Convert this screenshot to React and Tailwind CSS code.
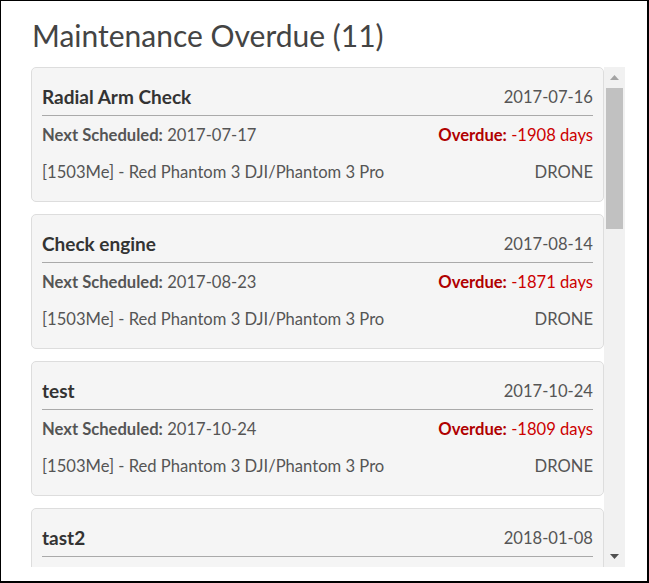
const ITEMS = [
  { name: "Radial Arm Check", last: "2017-07-16", next: "2017-07-17", days: -1908 },
  { name: "Check engine", last: "2017-08-14", next: "2017-08-23", days: -1871 },
  { name: "test", last: "2017-10-24", next: "2017-10-24", days: -1809 },
  { name: "tast2", last: "2018-01-08", next: "2018-01-09", days: -1732 },
  { name: "Propeller inspection", last: "2018-02-12", next: "2018-02-19", days: -1691 },
  { name: "Battery cycle", last: "2018-03-05", next: "2018-03-12", days: -1670 },
  { name: "Gimbal calibration", last: "2018-04-20", next: "2018-04-27", days: -1624 },
  { name: "Firmware update", last: "2018-05-15", next: "2018-05-22", days: -1599 },
  { name: "Motor check", last: "2018-06-11", next: "2018-06-18", days: -1572 },
  { name: "Compass calibration", last: "2018-07-02", next: "2018-07-09", days: -1551 },
  { name: "Landing gear", last: "2018-08-01", next: "2018-08-08", days: -1521 },
];

function Arrow({ up, color }) {
  return (
    <svg width="9" height="5" viewBox="0 0 9 5">
      <path d={up ? "M0 5 L4.5 0 L9 5 Z" : "M0 0 L9 0 L4.5 5 Z"} fill={color} />
    </svg>
  );
}

export default function App() {
  return (
    <div
      className="w-[649px] h-[583px] bg-white border-l border-t border-r-2 border-b-2 border-black overflow-hidden"
      style={{ fontFamily: "Lato, 'Open Sans', sans-serif" }}
    >
      <h1 className="pt-[16px] pl-[31px] text-[30px] leading-[36px] text-[#444] mb-[14px]">
        Maintenance Overdue (11)
      </h1>

      <div className="ml-[30px] flex h-[500px]">
        <div className="w-[573px] overflow-hidden">
          <div className="flex flex-col gap-[12px]">
            {ITEMS.map((it) => (
              <div
                key={it.name}
                className="rounded-[5px] border border-[#dddddd] bg-[#f5f5f5] px-[10px] pt-[11px] pb-[10px] text-[16.6px] text-[#555]"
              >
                <div className="flex h-[37px] items-center justify-between border-b border-[#aaaaaa]">
                  <span className="text-[19px] font-bold text-[#333]">{it.name}</span>
                  <span>{it.last}</span>
                </div>
                <div className="mt-[1px] flex h-[37px] items-center justify-between">
                  <span>
                    <b className="font-bold">Next Scheduled:</b> {it.next}
                  </span>
                  <span className="text-[#cc0000]">
                    <b className="font-bold text-[#b00000]">Overdue:</b> {it.days} days
                  </span>
                </div>
                <div className="flex h-[37px] items-center justify-between">
                  <span>[1503Me] - Red Phantom 3 DJI/Phantom 3 Pro</span>
                  <span>DRONE</span>
                </div>
              </div>
            ))}
          </div>
        </div>

        {/* scrollbar */}
        <div className="flex w-[21px] flex-col bg-[#f1f1f1] px-[2px]">
          <div className="flex h-[21px] items-center justify-center">
            <Arrow up color="#a3a3a3" />
          </div>
          <div className="h-[141px] bg-[#c1c1c1]" />
          <div className="flex-1" />
          <div className="flex h-[21px] items-center justify-center">
            <Arrow color="#505050" />
          </div>
        </div>
      </div>
    </div>
  );
}
